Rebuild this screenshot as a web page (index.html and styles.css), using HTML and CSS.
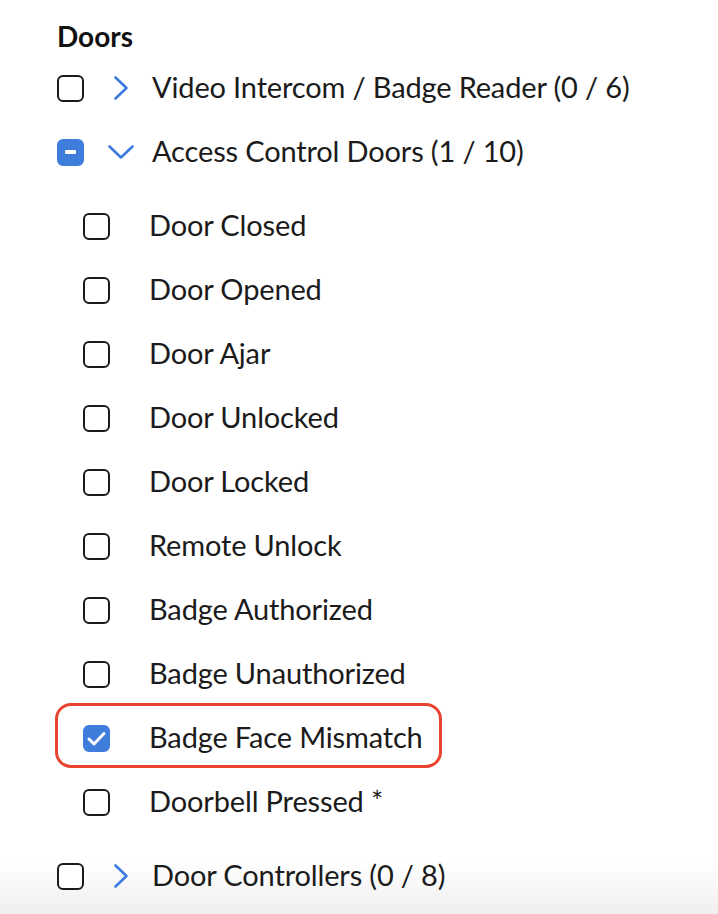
FILE: index.html
```html
<!DOCTYPE html>
<html>
<head>
<meta charset="utf-8">
<link rel="stylesheet" href="styles.css">
</head>
<body>
<div class="panel">
  <h2 class="title">Doors</h2>
  <ul class="tree">
    <li class="group">
      <div class="row top">
        <span class="cb"></span>
        <svg class="chev right" viewBox="0 0 16 26" width="16" height="26"><path d="M2.5 2.5 L13.5 13 L2.5 23.5" fill="none" stroke="#3d7be0" stroke-width="2.6" stroke-linecap="round" stroke-linejoin="round"/></svg>
        <span class="label">Video Intercom / Badge Reader (0 / 6)</span>
      </div>
    </li>
    <li class="group open">
      <div class="row top">
        <span class="cb partial"><span class="dash"></span></span>
        <svg class="chev down" viewBox="0 0 28 16" width="28" height="16"><path d="M2.5 2.5 L14 13.5 L25.5 2.5" fill="none" stroke="#3d7be0" stroke-width="2.6" stroke-linecap="round" stroke-linejoin="round"/></svg>
        <span class="label">Access Control Doors (1 / 10)</span>
      </div>
      <ul class="children">
        <li class="row child"><span class="cb"></span><span class="label">Door Closed</span></li>
        <li class="row child"><span class="cb"></span><span class="label">Door Opened</span></li>
        <li class="row child"><span class="cb"></span><span class="label">Door Ajar</span></li>
        <li class="row child"><span class="cb"></span><span class="label">Door Unlocked</span></li>
        <li class="row child"><span class="cb"></span><span class="label">Door Locked</span></li>
        <li class="row child"><span class="cb"></span><span class="label">Remote Unlock</span></li>
        <li class="row child"><span class="cb"></span><span class="label">Badge Authorized</span></li>
        <li class="row child"><span class="cb"></span><span class="label">Badge Unauthorized</span></li>
        <li class="row child highlight"><span class="cb checked"><svg viewBox="0 0 27 27" width="27" height="27"><path d="M6 14 L11 19 L21 8.5" fill="none" stroke="#fff" stroke-width="3" stroke-linecap="round" stroke-linejoin="round"/></svg></span><span class="label">Badge Face Mismatch</span></li>
        <li class="row child"><span class="cb"></span><span class="label">Doorbell Pressed *</span></li>
      </ul>
    </li>
    <li class="group">
      <div class="row top">
        <span class="cb"></span>
        <svg class="chev right" viewBox="0 0 16 26" width="16" height="26"><path d="M2.5 2.5 L13.5 13 L2.5 23.5" fill="none" stroke="#3d7be0" stroke-width="2.6" stroke-linecap="round" stroke-linejoin="round"/></svg>
        <span class="label">Door Controllers (0 / 8)</span>
      </div>
    </li>
  </ul>
</div>
</body>
</html>
```

FILE: styles.css
```css
html, body {
  margin: 0;
  padding: 0;
  height: 914px;
  overflow: hidden;
}
body {
  background: linear-gradient(to bottom, #ffffff 0, #ffffff 862px, #efefef 914px);
  font-family: "Lato", "Open Sans", sans-serif;
  color: #1b1b1b;
}
.panel {
  padding: 17px 0 0 57px;
}
.title {
  margin: 0 0 1px;
  font-size: 28px;
  font-weight: 700;
  line-height: 38px;
  color: #111;
}
.tree, .children {
  list-style: none;
  margin: 0;
  padding: 0;
}
.row {
  display: flex;
  align-items: center;
  height: 64px;
}
.children {
  padding: 10px 0 10px 26px;
}
.cb {
  box-sizing: border-box;
  width: 27px;
  height: 27px;
  border: 2px solid #1a1a1a;
  border-radius: 6px;
  flex: none;
  display: flex;
  align-items: center;
  justify-content: center;
  background: #fff;
}
.cb.partial, .cb.checked {
  background: #3f7ddd;
  border-color: #3f7ddd;
}
.cb.checked svg {
  flex: none;
  margin: -2px;
}
.dash {
  width: 11px;
  height: 4px;
  border-radius: 1px;
  background: #fff;
}
.chev {
  flex: none;
}
.chev.right {
  margin-left: 29px;
  margin-right: 23px;
}
.chev.down {
  margin-left: 23px;
  margin-right: 17px;
}
.label {
  font-size: 29px;
  line-height: 1;
  white-space: nowrap;
  letter-spacing: -0.15px;
  margin-bottom: 4px;
}
.row.child .label {
  margin-left: 39px;
}
.highlight {
  position: relative;
}
.highlight::before {
  content: "";
  position: absolute;
  left: -28px;
  top: -3px;
  width: 387px;
  height: 65px;
  box-sizing: border-box;
  border: 3px solid #e8432f;
  border-radius: 16px;
}
```
